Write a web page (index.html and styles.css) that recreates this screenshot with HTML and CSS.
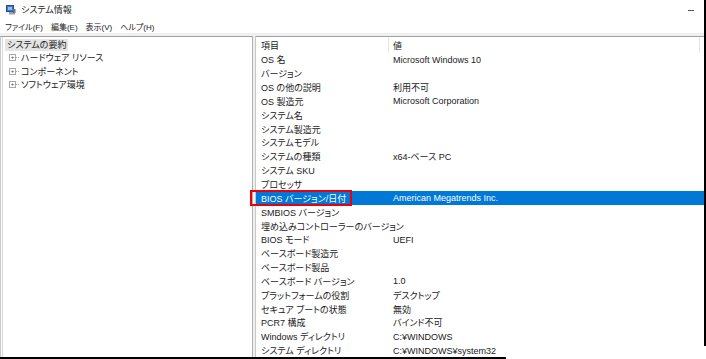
FILE: index.html
```html
<!DOCTYPE html>
<html lang="ja">
<head>
<meta charset="utf-8">
<link rel="stylesheet" href="styles.css">
</head>
<body>
<div class="window">
  <div class="titlebar">
    <svg class="appicon" width="10" height="10" viewBox="0 0 10 10">
      <rect x="0.5" y="0.5" width="7" height="6" fill="#3a78c8" stroke="#25508a" stroke-width="1"/>
      <rect x="2" y="2" width="4" height="3" fill="#8fc0f0"/>
      <rect x="3" y="7" width="6" height="2.5" fill="#9aa0a8"/>
      <rect x="7" y="4" width="2.5" height="4" fill="#6d737c"/>
    </svg>
    <span class="title">システム情報</span>
    <span class="minimize"></span>
  </div>
  <div class="menubar">
    <span>ファイル(F)</span>
    <span>編集(E)</span>
    <span>表示(V)</span>
    <span>ヘルプ(H)</span>
  </div>
  <div class="panes">
    <div class="tree">
      <div class="tree-root"><span class="root-label">システムの要約</span></div>
      <div class="tree-item"><span class="expander">+</span><span class="dots"></span>ハードウェア リソース</div>
      <div class="tree-item"><span class="expander">+</span><span class="dots"></span>コンポーネント</div>
      <div class="tree-item"><span class="expander">+</span><span class="dots"></span>ソフトウェア環境</div>
    </div>
    <div class="splitter"></div>
    <div class="list">
      <div class="header">
        <div class="col-label">項目</div>
        <div class="col-value">値</div>
      </div>
      <div class="row"><div class="col-label">OS 名</div><div class="col-value">Microsoft Windows 10</div></div>
      <div class="row"><div class="col-label">バージョン</div><div class="col-value"></div></div>
      <div class="row"><div class="col-label">OS の他の説明</div><div class="col-value">利用不可</div></div>
      <div class="row"><div class="col-label">OS 製造元</div><div class="col-value">Microsoft Corporation</div></div>
      <div class="row"><div class="col-label">システム名</div><div class="col-value"></div></div>
      <div class="row"><div class="col-label">システム製造元</div><div class="col-value"></div></div>
      <div class="row"><div class="col-label">システムモデル</div><div class="col-value"></div></div>
      <div class="row"><div class="col-label">システムの種類</div><div class="col-value">x64-ベース PC</div></div>
      <div class="row"><div class="col-label">システム SKU</div><div class="col-value"></div></div>
      <div class="row"><div class="col-label">プロセッサ</div><div class="col-value"></div></div>
      <div class="row selected"><div class="col-label">BIOS バージョン/日付</div><div class="col-value">American Megatrends Inc.</div></div>
      <div class="row"><div class="col-label">SMBIOS バージョン</div><div class="col-value"></div></div>
      <div class="row"><div class="col-label">埋め込みコントローラーのバージョン</div><div class="col-value"></div></div>
      <div class="row"><div class="col-label">BIOS モード</div><div class="col-value">UEFI</div></div>
      <div class="row"><div class="col-label">ベースボード製造元</div><div class="col-value"></div></div>
      <div class="row"><div class="col-label">ベースボード製品</div><div class="col-value"></div></div>
      <div class="row"><div class="col-label">ベースボード バージョン</div><div class="col-value">1.0</div></div>
      <div class="row"><div class="col-label">プラットフォームの役割</div><div class="col-value">デスクトップ</div></div>
      <div class="row"><div class="col-label">セキュア ブートの状態</div><div class="col-value">無効</div></div>
      <div class="row"><div class="col-label">PCR7 構成</div><div class="col-value">バインド不可</div></div>
      <div class="row"><div class="col-label">Windows ディレクトリ</div><div class="col-value">C:¥WINDOWS</div></div>
      <div class="row"><div class="col-label">システム ディレクトリ</div><div class="col-value">C:¥WINDOWS¥system32</div></div>
    </div>
  </div>
  <div class="redbox"></div>
</div>
</body>
</html>
```

FILE: styles.css
```css
html, body {
  margin: 0;
  padding: 0;
  background: #fff;
}
body {
  width: 706px;
  height: 359px;
  overflow: hidden;
  font-family: "Liberation Sans", "Noto Sans CJK JP", sans-serif;
  font-size: 9px;
  font-feature-settings: "palt";
  color: #1a1a1a;
}
.window {
  position: relative;
  width: 706px;
  height: 359px;
  display: flex;
  flex-direction: column;
  overflow: hidden;
}
.window::before {
  content: "";
  position: absolute;
  right: 0;
  top: 0;
  width: 2px;
  height: 346px;
  background: #000;
  z-index: 3;
}
.window::after {
  content: "";
  position: absolute;
  left: 0;
  bottom: 0;
  width: 506px;
  height: 2px;
  background: #000;
  z-index: 3;
}
.titlebar {
  height: 20px;
  display: flex;
  align-items: center;
  padding-left: 6px;
  gap: 5px;
  flex: none;
}
.appicon { flex: none; }
.title { line-height: 1; }
.minimize {
  margin-left: auto;
  margin-right: 12px;
  width: 6px;
  height: 1px;
  background: #555;
}
.menubar {
  height: 13px;
  display: flex;
  align-items: center;
  gap: 8px;
  padding-left: 5px;
  flex: none;
  font-size: 8px;
}
.panes {
  flex: 1;
  display: flex;
  border-top: 3px solid #f0f0f0;
  min-height: 0;
}
.tree {
  width: 247px;
  flex: none;
  border-left: 1px solid #c8c8c8;
  box-shadow: inset 1px 0 0 #fff, inset 2px 0 0 #d8d8d8;
  border-top: 1px solid #a0a0a0;
  padding: 2px 0 0 4px;
}
.tree-root {
  height: 12px;
  display: flex;
  align-items: center;
}
.root-label {
  background: #e4e4e4;
  padding: 0 2px;
  line-height: 12px;
}
.tree-item {
  height: 13.5px;
  display: flex;
  align-items: center;
  padding-left: 4px;
}
.tree-item:first-of-type { margin-top: 1px; }
.expander {
  width: 5px;
  height: 5px;
  border: 1px solid #a8a8a8;
  font-size: 6px;
  line-height: 5px;
  text-align: center;
  color: #444;
  flex: none;
}
.dots {
  width: 3px;
  border-top: 1px dotted #a8a8a8;
  margin-right: 2px;
}
.splitter {
  width: 2px;
  flex: none;
  border-left: 1px solid #b0b0b0;
  border-right: 1px solid #c8c8c8;
  background: #f0f0f0;
}
.list {
  flex: 1;
  border-top: 1px solid #a0a0a0;
  min-width: 0;
}
.header {
  height: 16px;
  display: flex;
  align-items: center;
}
.header .col-value {
  border-left: 1px solid #e5e5e5;
  border-right: 1px solid #e5e5e5;
  height: 15px;
  width: 306px;
  display: flex;
  align-items: center;
  padding-left: 4px;
}
.row {
  height: 13.85px;
  display: flex;
  align-items: center;
  white-space: nowrap;
}
.col-label {
  width: 127px;
  padding-left: 5px;
  flex: none;
}
.col-value {
  padding-left: 5px;
  flex: none;
}
.row.selected {
  background: #0078d7;
  color: #fff;
}
.redbox {
  position: absolute;
  left: 250px;
  top: 190px;
  width: 98px;
  height: 12px;
  border: 2px solid #e8000b;
  z-index: 2;
}
```
